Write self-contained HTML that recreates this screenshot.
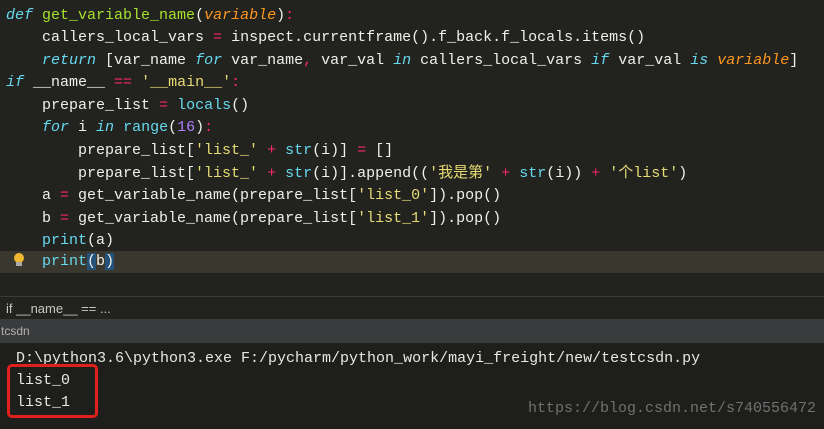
<!DOCTYPE html>
<html><head><meta charset="utf-8"><style>
body{margin:0;width:824px;height:429px;overflow:hidden;background:#22221f;font-family:"Liberation Mono","Noto Sans CJK SC",monospace;}
.ed{position:absolute;left:0;top:0;width:824px;height:296px;background:#22221f;}
.l{position:absolute;left:6px;font-size:15px;color:#f0f0ea;white-space:pre;height:22px;line-height:22px;}
.k{color:#66d9ef;font-style:italic}.f{color:#a6e22e}.p{color:#fd971f;font-style:italic}
.o{color:#f92672}.s{color:#e6db74}.n{color:#ae81ff}.b{color:#66d9ef}
.hl{position:absolute;left:0;top:251px;width:824px;height:22px;background:#3a382e;}
.bc{position:absolute;left:0;top:296px;width:824px;height:23px;border-top:1px solid #3a3a36;background:#22221f;color:#c8c8c0;font-family:"Liberation Sans",sans-serif;font-size:13px;line-height:23px;padding-left:6px;box-sizing:border-box}
.tab{position:absolute;left:0;top:319px;width:824px;height:24px;background:#3a3b3d;color:#b0b0b0;font-family:"Liberation Sans",sans-serif;font-size:12px;line-height:24px;padding-left:1px}
.con{position:absolute;left:0;top:343px;width:824px;height:86px;background:#1e1e1c;}
.c{position:absolute;left:16px;font-size:15px;color:#e8e8e2;white-space:pre;line-height:22px}
.box{position:absolute;left:7px;top:364px;width:91px;height:54px;border:3px solid #e0201a;border-radius:5px;box-sizing:border-box}
.wm{position:absolute;left:528px;top:400px;font-family:"Liberation Mono",monospace;font-size:15px;color:#707070;white-space:pre}
</style></head><body>
<div class="ed">
<div class="hl"></div>
<div class="l" style="top:5px"><span class="k">def</span> <span class="f">get_variable_name</span>(<span class="p">variable</span>)<span class="o">:</span></div>
<div class="l" style="top:27px">    callers_local_vars <span class="o">=</span> inspect.currentframe().f_back.f_locals.items()</div>
<div class="l" style="top:50px">    <span class="k">return</span> [var_name <span class="k">for</span> var_name<span class="o">,</span> var_val <span class="k">in</span> callers_local_vars <span class="k">if</span> var_val <span class="k">is</span> <span class="p">variable</span>]</div>
<div class="l" style="top:72px"><span class="k">if</span> __name__ <span class="o">==</span> <span class="s">'__main__'</span><span class="o">:</span></div>
<div class="l" style="top:95px">    prepare_list <span class="o">=</span> <span class="b">locals</span>()</div>
<div class="l" style="top:117px">    <span class="k">for</span> i <span class="k">in</span> <span class="b">range</span>(<span class="n">16</span>)<span class="o">:</span></div>
<div class="l" style="top:140px">        prepare_list[<span class="s">'list_'</span> <span class="o">+</span> <span class="b">str</span>(i)] <span class="o">=</span> []</div>
<div class="l" style="top:163px">        prepare_list[<span class="s">'list_'</span> <span class="o">+</span> <span class="b">str</span>(i)].append((<span class="s">'我是第'</span> <span class="o">+</span> <span class="b">str</span>(i)) <span class="o">+</span> <span class="s">'个list'</span>)</div>
<div class="l" style="top:185px">    a <span class="o">=</span> get_variable_name(prepare_list[<span class="s">'list_0'</span>]).pop()</div>
<div class="l" style="top:208px">    b <span class="o">=</span> get_variable_name(prepare_list[<span class="s">'list_1'</span>]).pop()</div>
<div class="l" style="top:230px">    <span class="b">print</span>(a)</div>
<div class="l" style="top:251px">    <span class="b">print</span><span style="background:#24527a">(</span>b<span style="background:#24527a">)</span></div>
<div style="position:absolute;left:14px;top:253px;width:10px;height:10px;border-radius:50%;background:#f0b830"></div>
<div style="position:absolute;left:16px;top:262px;width:6px;height:4px;background:#aaa"></div>
</div>
<div class="bc">if __name__ == ...</div>
<div class="tab">tcsdn</div>
<div class="con">
<div class="c" style="top:5px">D:\python3.6\python3.exe F:/pycharm/python_work/mayi_freight/new/testcsdn.py</div>
<div class="c" style="top:27px">list_0</div>
<div class="c" style="top:49px">list_1</div>
</div>
<div class="box"></div>
<div class="wm">https://blog.csdn.net/s740556472</div>
</body></html>
